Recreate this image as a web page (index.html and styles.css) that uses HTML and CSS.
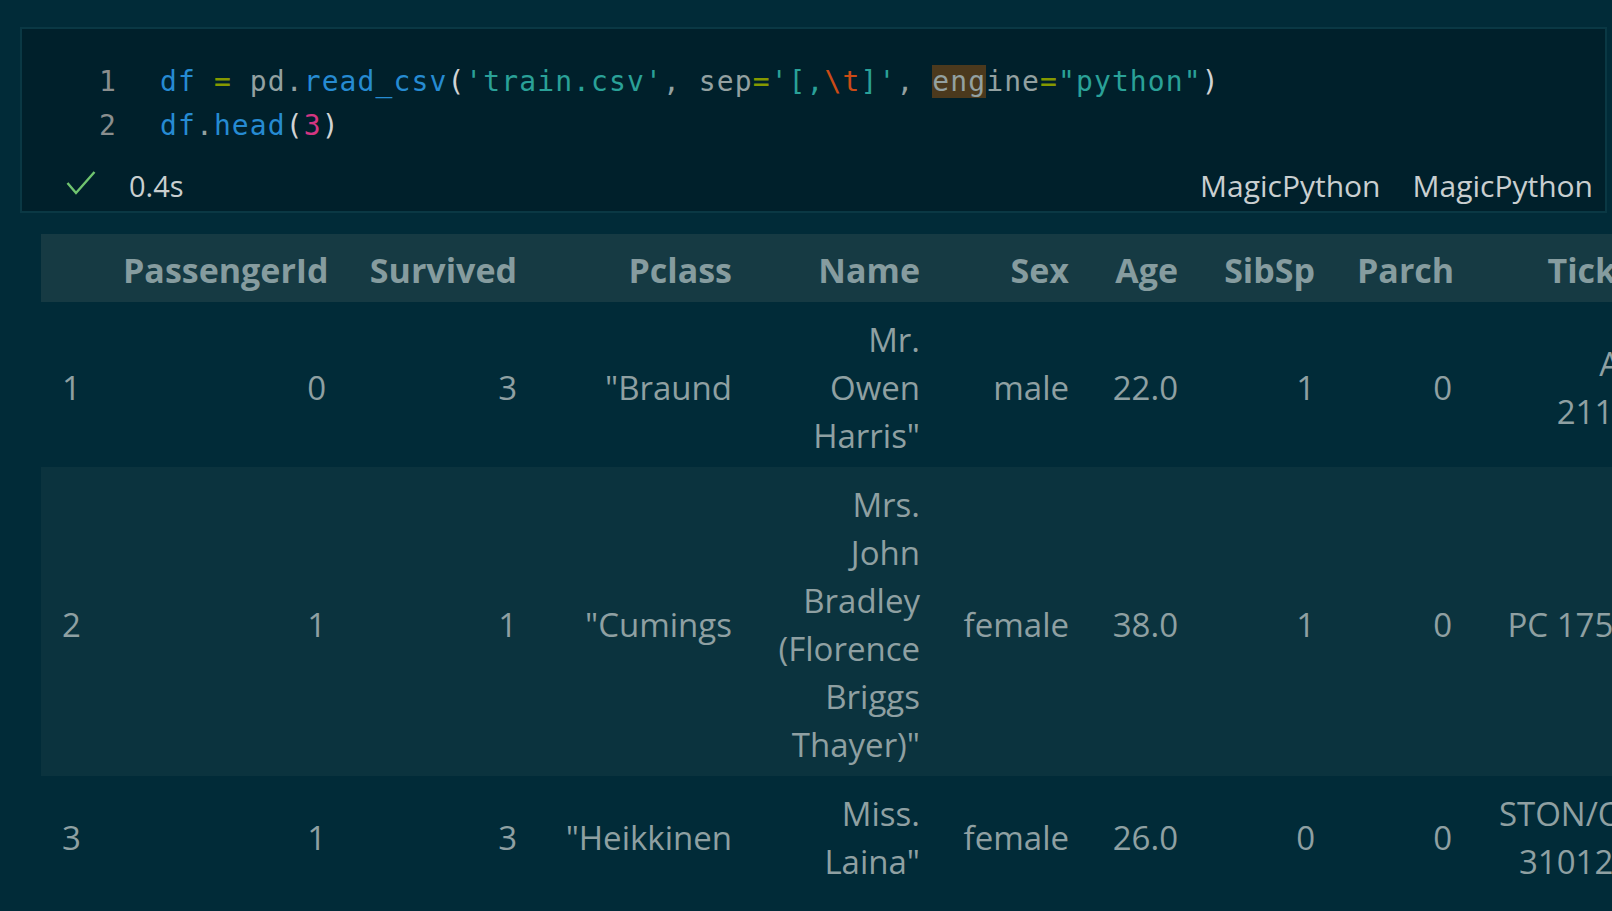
FILE: index.html
```html
<!DOCTYPE html>
<html>
<head>
<meta charset="utf-8">
<link rel="stylesheet" href="styles.css">
</head>
<body>
<div class="page">
  <div class="cell">
    <div class="code">
      <div class="line"><span class="ln">1</span><span class="src"><span class="b">df</span> <span class="g">=</span> pd.<span class="b">read_csv</span><span class="p">(</span><span class="s">'train.csv'</span>, sep<span class="g">=</span><span class="s">'[,</span><span class="e">\t</span><span class="s">]'</span>, <span class="hl">eng</span>ine<span class="g">=</span><span class="s">"python"</span><span class="p">)</span></span></div>
      <div class="line"><span class="ln">2</span><span class="src"><span class="b">df</span>.<span class="b">head</span><span class="p">(</span><span class="m">3</span><span class="p">)</span></span></div>
    </div>
    <div class="status">
      <svg class="check" width="30" height="26" viewBox="0 0 30 26"><polyline points="1.5,13 10,23 28.5,2" fill="none" stroke="#6fc46f" stroke-width="2.4" stroke-linejoin="miter"/></svg>
      <span class="time">0.4s</span>
      <span class="lang">MagicPython</span>
      <span class="lang">MagicPython</span>
    </div>
  </div>
  <div class="output">
    <table class="df">
      <colgroup>
        <col class="c-idx"><col class="c-pid"><col class="c-sur"><col class="c-pcl"><col class="c-name"><col class="c-sex"><col class="c-age"><col class="c-sib"><col class="c-par"><col class="c-tic"><col class="c-fare"><col class="c-cab"><col class="c-emb">
      </colgroup>
      <thead>
        <tr><th></th><th>PassengerId</th><th>Survived</th><th>Pclass</th><th>Name</th><th>Sex</th><th>Age</th><th>SibSp</th><th>Parch</th><th>Ticket</th><th>Fare</th><th>Cabin</th><th>Embarked</th></tr>
      </thead>
      <tbody>
        <tr><td class="idx">1</td><td>0</td><td>3</td><td>"Braund</td><td><div class="mc">Mr. Owen Harris"</div></td><td>male</td><td>22.0</td><td>1</td><td>0</td><td><div class="mc">A/5 21171</div></td><td>7.2500</td><td></td><td>S</td></tr>
        <tr class="alt"><td class="idx">2</td><td>1</td><td>1</td><td>"Cumings</td><td><div class="mc">Mrs. John Bradley (Florence Briggs Thayer)"</div></td><td>female</td><td>38.0</td><td>1</td><td>0</td><td class="nw">PC 17599</td><td>71.2833</td><td>C85</td><td>C</td></tr>
        <tr><td class="idx">3</td><td>1</td><td>3</td><td>"Heikkinen</td><td><div class="mc">Miss. Laina"</div></td><td>female</td><td>26.0</td><td>0</td><td>0</td><td><div class="mc">STON/O2. 3101282</div></td><td>7.9250</td><td></td><td>S</td></tr>
      </tbody>
    </table>
  </div>
</div>
</body>
</html>
```

FILE: styles.css
```css
html, body {
  margin: 0;
  padding: 0;
  overflow: hidden;
  background: #012b38;
}
body {
  width: 1612px;
  height: 911px;
}
.page {
  padding: 27px 5px 0 20px;
}
.cell {
  background: #00202b;
  border: 2px solid #0a3844;
  padding: 31px 0 4px 0;
}
.code {
  font-family: "DejaVu Sans Mono", monospace;
  font-size: 28px;
  letter-spacing: 1.1px;
  color: #93a1a1;
}
.line {
  display: flex;
  height: 44px;
  line-height: 44px;
  white-space: pre;
}
.ln {
  width: 95px;
  text-align: right;
  color: #8a8e8e;
  flex: none;
}
.src {
  margin-left: 43px;
}
.b { color: #268bd2; }
.g { color: #859900; }
.s { color: #2aa198; }
.e { color: #cb4b16; }
.m { color: #d33682; }
.p { color: #d0d3d4; }
.hl { background: #4b391d; }

.status {
  display: flex;
  align-items: center;
  height: 44px;
  margin-top: 15px;
  padding: 0 12px 0 44px;
  font-family: "Open Sans", "Noto Sans", sans-serif;
  font-size: 30px;
  color: #c9cfd0;
}
.check {
  flex: none;
  margin-top: -4px;
}
.time {
  margin-left: 33px;
  font-size: 29px;
}
.lang {
  margin-left: 32px;
}
.time + .lang {
  margin-left: auto;
}

.output {
  margin: 21px 0 0 21px;
}
.df {
  border-collapse: collapse;
  table-layout: fixed;
  width: 2131px;
  font-family: "Open Sans", "Noto Sans", sans-serif;
  font-size: 33px;
  line-height: 48px;
  color: #8fa0a2;
}
.c-idx { width: 61px; }
.c-pid { width: 245px; }
.c-sur { width: 191px; }
.c-pcl { width: 215px; }
.c-name { width: 188px; }
.c-sex { width: 149px; }
.c-age { width: 109px; }
.c-sib { width: 137px; }
.c-par { width: 137px; }
.c-tic { width: 199px; }
.c-fare { width: 170px; }
.c-cab { width: 140px; }
.c-emb { width: 190px; }
.df thead tr {
  background: #163a43;
}
.df th {
  font-weight: 700;
  font-size: 34px;
  color: #869c9f;
  text-align: right;
  padding: 12px 21px 8px;
  white-space: nowrap;
}
.df td {
  text-align: right;
  vertical-align: middle;
  padding: 14px 21px 7px;
}
.df td.idx {
  text-align: left;
}
.df td.nw {
  white-space: nowrap;
}
.mc {
  width: min-content;
  margin-left: auto;
}
.df tr.alt {
  background: #0b333e;
}
```
